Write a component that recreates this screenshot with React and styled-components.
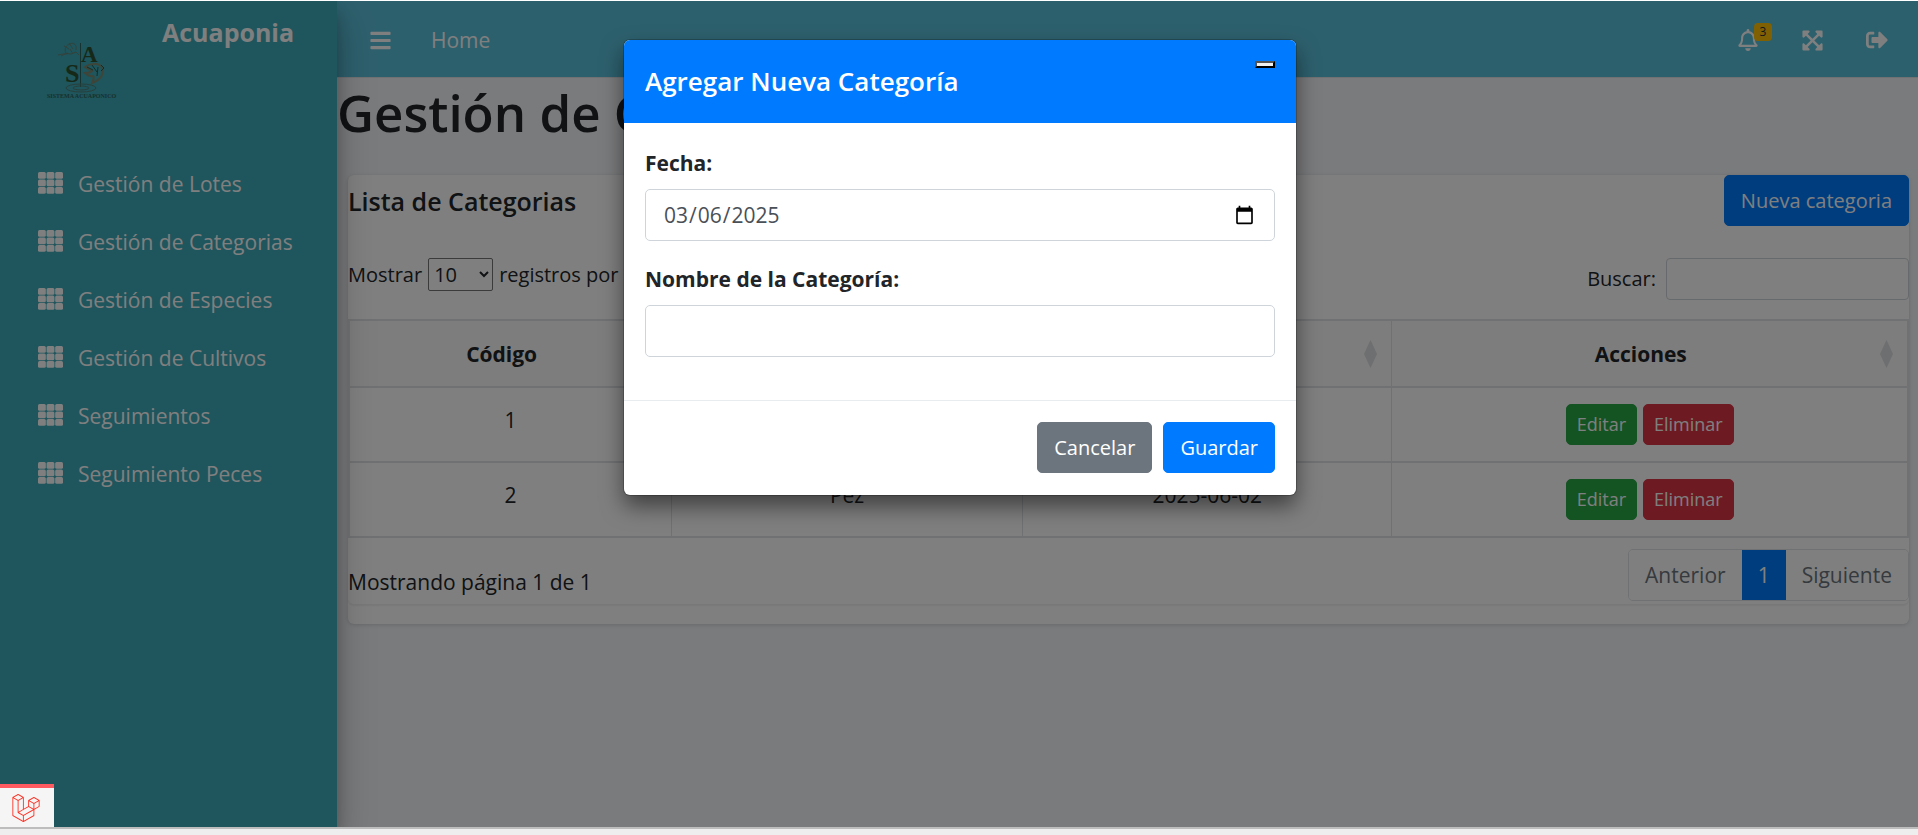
import React from "react";
import styled, { createGlobalStyle } from "styled-components";
import { FaBars, FaRegBell, FaExpandArrowsAlt, FaSignOutAlt } from "react-icons/fa";
import { SiLaravel } from "react-icons/si";

const GlobalStyle = createGlobalStyle`
  *, *::before, *::after { box-sizing: border-box; }
  body {
    margin: 0;
    background: #fff;
    color: #212529;
    font-family: "Open Sans", "Noto Sans", sans-serif;
    font-size: 21px;
    line-height: 32px;
  }
  button, input, select { font: inherit; color: inherit; }
  h1, h2, p, ul { margin: 0; padding: 0; }
  a { color: inherit; text-decoration: none; }
`;

const Page = styled.div`
  display: flex;
  flex-direction: column;
  min-height: 100vh;
  padding-top: 1px;
`;

const Screen = styled.div`
  position: relative;
  display: flex;
  flex: 1;
  overflow: hidden;
`;

const WindowEdge = styled.div`
  height: 8px;
  border-top: 2px solid #bdbdbd;
  background: #eee;
`;

const Sidebar = styled.aside`
  z-index: 1;
  flex: none;
  width: 337px;
  background: #3eaab8;
  color: #fff;
  box-shadow: 0 18px 36px rgba(0, 0, 0, 0.25), 0 12px 14px rgba(0, 0, 0, 0.22);
`;

const Brand = styled.a`
  display: flex;
  align-items: flex-start;
  gap: 42px;
  height: 138px;
  padding: 15px 36px 0 42px;
  font-size: 25px;
  font-weight: 700;
`;

const BrandLogo = styled.svg`
  flex: none;
  width: 78px;
  height: 78px;
  margin-top: 13px;
`;

const Menu = styled.ul`
  display: grid;
  gap: 6px;
  padding: 19px 11px;
  list-style: none;
`;

const MenuLink = styled.a`
  display: flex;
  align-items: flex-start;
  gap: 15px;
  height: 52px;
  padding: 11px 27px;
  line-height: 30px;
  white-space: nowrap;
  svg { flex: none; margin-top: 3px; }
`;

const Main = styled.div`
  flex: 1;
  min-width: 0;
  background: #f4f6f9;
`;

const Navbar = styled.header`
  display: flex;
  justify-content: space-between;
  align-items: center;
  height: 77px;
  padding: 2px 30px 0 32px;
  border-bottom: 1px solid #dee2e6;
  background: #5bc0da;
  color: #fff;
`;

const NavGroup = styled.nav`
  display: flex;
  align-items: center;
  gap: ${(p) => p.$gap}px;
`;

const IconButton = styled.button`
  position: relative;
  display: flex;
  padding: 0;
  border: 0;
  background: none;
`;

const Count = styled.span`
  position: absolute;
  top: -6px;
  left: 17px;
  width: 18px;
  border-radius: 4px;
  background: #ffc107;
  color: #1f2d3d;
  font-size: 12px;
  line-height: 18px;
  text-align: center;
`;

const PageTitle = styled.h1`
  padding: 2px 0 1px;
  font-size: 51px;
  font-weight: 600;
  line-height: 64px;
`;

const Card = styled.section`
  margin: 30px 9px 0 11px;
  padding-bottom: 20px;
  border-radius: 6px;
  background: #fff;
  box-shadow: 0 1px 4px rgba(0, 0, 0, 0.15);
`;

const CardBody = styled.div`
  padding-bottom: 3px;
  border-radius: 6px;
  box-shadow: 0 2px 2px rgba(0, 0, 0, 0.06);
`;

const CardHead = styled.div`
  display: flex;
  justify-content: space-between;
  align-items: center;
`;

const CardTitle = styled.h2`
  font-size: 25px;
  font-weight: 600;
`;

const Button = styled.button`
  padding: ${(p) => (p.$small ? "5px 10px" : "9px 16px")};
  border: 1px solid ${(p) => p.$color};
  border-radius: 5px;
  background: ${(p) => p.$color};
  color: #fff;
  font-size: ${(p) => (p.$small ? 18 : 20)}px;
  line-height: ${(p) => (p.$small ? 29 : 31)}px;
`;

const Tools = styled.div`
  display: flex;
  justify-content: space-between;
  align-items: flex-start;
  margin: 32px 0 19px;
  font-size: 20px;
`;

const Tool = styled.label`
  display: flex;
  align-items: center;
  gap: ${(p) => p.$gap}px;
`;

const PageSize = styled.select`
  width: 65px;
  height: 33px;
  padding: 0 1px;
  border: 1px solid #767676;
  border-radius: 2px;
  background: #fff;
`;

const SearchBox = styled.input`
  width: 243px;
  height: 42px;
  padding: 5px 10px;
  border: 1px solid #ced4da;
  border-radius: 4px;
  background: #fff;
`;

const Table = styled.table`
  width: 100%;
  border-collapse: collapse;
  border: 2px solid #dee2e6;
  table-layout: fixed;
  text-align: center;
`;

const Col = styled.col`
  width: ${(p) => p.$share}%;
`;

const HeadCell = styled.th`
  height: 67px;
  padding: 0 14px 0 16px;
  border: 1px solid #dee2e6;
  border-width: 2px 1px;
  background: #fafafa;
  font-weight: 700;
`;

const HeadLabel = styled.span`
  display: flex;
  align-items: center;
  gap: 7px;
  span { flex: 1; }
`;

const Cell = styled.td`
  height: 75px;
  padding: 16px;
  border: 1px solid #dee2e6;
  border-width: 2px 1px;
  vertical-align: top;
`;

const Actions = styled.div`
  display: flex;
  justify-content: center;
  gap: 6px;
`;

const TableFoot = styled.div`
  display: flex;
  justify-content: space-between;
  align-items: center;
  margin-top: 11px;
`;

const PageInfo = styled.p`
  padding-top: 14px;
`;

const Pager = styled.nav`
  display: flex;
  overflow: hidden;
  border: 1px solid #dee2e6;
  border-radius: 5px;
`;

const PageLink = styled.button`
  padding: 9px 16px;
  border: 0;
  background: ${(p) => (p.$active ? "#007bff" : "#fff")};
  color: ${(p) => (p.$active ? "#fff" : "#6c757d")};
`;

const Backdrop = styled.div`
  position: absolute;
  inset: 0;
  z-index: 2;
  display: flex;
  justify-content: center;
  align-items: flex-start;
  padding-top: 39px;
  background: rgba(0, 0, 0, 0.5);
`;

const Dialog = styled.form`
  width: 100%;
  max-width: 672px;
  margin-left: 2px;
  overflow: hidden;
  border-radius: 6px;
  background: #fff;
  box-shadow: 0 11px 22px rgba(0, 0, 0, 0.5), 0 0 0 1px rgba(0, 0, 0, 0.2);
`;

const DialogHead = styled.header`
  display: flex;
  justify-content: space-between;
  align-items: flex-start;
  padding: 21px;
  background: #007bff;
  color: #fff;
`;

const DialogTitle = styled.h2`
  font-size: 26px;
  font-weight: 600;
  line-height: 41px;
`;

const CloseButton = styled.button`
  width: 20px;
  height: 7px;
  padding: 0;
  border: 2px outset #000;
  background: #f0f0f0;
`;

const DialogBody = styled.div`
  display: grid;
  gap: 22px;
  padding: 24px 21px 43px;
`;

const Field = styled.label`
  display: grid;
  gap: 10px;
  font-weight: 700;
`;

const TextInput = styled.input`
  width: 100%;
  height: 52px;
  padding: 8px 17px;
  border: 1px solid #ced4da;
  border-radius: 5px;
  background: #fff;
  color: #495057;
  font-weight: 400;
`;

const DialogFoot = styled.footer`
  display: flex;
  justify-content: flex-end;
  gap: 11px;
  padding: 21px 21px 22px;
  border-top: 1px solid #e9ecef;
`;

const DebugBadge = styled.button`
  position: absolute;
  bottom: 0;
  left: 0;
  z-index: 3;
  display: flex;
  justify-content: center;
  align-items: center;
  width: 54px;
  height: 43px;
  padding: 0 3px 0 0;
  border: 0;
  border-top: 4px solid #ff5a5f;
  background: #f5f5f5;
  color: #ff2d20;
`;

const menu = [
  "Gestión de Lotes",
  "Gestión de Categorias",
  "Gestión de Especies",
  "Gestión de Cultivos",
  "Seguimientos",
  "Seguimiento Peces",
];

const columns = [
  { name: "Código", share: 20.7 },
  { name: "Nombre", share: 22.5 },
  { name: "Fecha", share: 23.7 },
  { name: "Acciones", share: 33.1 },
];

const rows = [
  { id: 1, name: "Planta", date: "2025-06-02" },
  { id: 2, name: "Pez", date: "2025-06-02" },
];

function Logo() {
  return (
    <BrandLogo viewBox="0 0 78 78" aria-hidden="true" fill="none" stroke="#4f8078" strokeWidth="1">
      <path d="M38.500 14v44" stroke="#2f6660" />
      <path d="M16 26c5-1 9-2 13-1l5-2 3 3M24 24c-2-4 0-8 4-9 4-2 7 1 6 6M22 17l5 3M27 14l4 6M19 27l7-3M31 25l-3-5" stroke="#64857a" />
      <path d="M43 38c5-4 12-4 16-1 3 4 2 10-2 13-2 2-5 3-7 4 1-3 3-5 1-7-3 1-6-1-8-3 3 0 5 0 7-2z" stroke="#7c8a70" strokeWidth="2" />
      <path d="M45 38l6 3M50 36l5 7M56 38l-1 9M59 36l3 3-3 3" stroke="#2f5a48" />
      <ellipse cx="39" cy="59" rx="15" ry="4" />
      <ellipse cx="39" cy="59" rx="8" ry="2" />
      <g fill="#2c5230" stroke="none" fontFamily="Liberation Serif, serif">
        <text x="39" y="33" fontSize="23">A</text>
        <text x="23" y="53" fontSize="26">S</text>
        <text x="5" y="69" fontSize="6" fill="#2c6460">SISTEMA ACUAPONICO</text>
      </g>
    </BrandLogo>
  );
}

function GridIcon() {
  return (
    <svg width="25" height="22" viewBox="0 0 25 22" fill="currentColor" aria-hidden="true">
      {[0, 7.5, 15].map((y) =>
        [0, 8.600, 17.200].map((x) => (
          <rect key={`${x}-${y}`} x={x} y={y} width="7.800" height="6.800" rx="1.500" />
        ))
      )}
    </svg>
  );
}

function SortMark() {
  return (
    <svg width="13" height="28" viewBox="0 0 13 28" fill="#dcdee0" aria-hidden="true">
      <path d="M6.500 0L13 14L6.500 28L0 14z" />
    </svg>
  );
}

export default function App() {
  return (
    <Page>
      <GlobalStyle />
      <Screen>
        <Sidebar>
          <Brand href="#">
            <Logo />
            Acuaponia
          </Brand>
          <Menu>
            {menu.map((item) => (
              <li key={item}>
                <MenuLink href="#">
                  <GridIcon />
                  {item}
                </MenuLink>
              </li>
            ))}
          </Menu>
        </Sidebar>
        <Main>
          <Navbar>
            <NavGroup $gap={39}>
              <IconButton aria-label="Menu"><FaBars size={23} /></IconButton>
              <a href="#">Home</a>
            </NavGroup>
            <NavGroup $gap={42}>
              <IconButton aria-label="Notificaciones">
                <FaRegBell size={22} />
                <Count>3</Count>
              </IconButton>
              <IconButton aria-label="Pantalla completa"><FaExpandArrowsAlt size={23} /></IconButton>
              <IconButton aria-label="Salir"><FaSignOutAlt size={22} /></IconButton>
            </NavGroup>
          </Navbar>
          <PageTitle>Gestión de Categorias</PageTitle>
          <Card>
            <CardBody>
              <CardHead>
                <CardTitle>Lista de Categorias</CardTitle>
                <Button type="button" $color="#007bff">Nueva categoria</Button>
              </CardHead>
              <Tools>
                <Tool $gap={6}>
                  Mostrar
                  <PageSize defaultValue="10">
                    <option>10</option>
                    <option>25</option>
                    <option>50</option>
                  </PageSize>
                  registros por página
                </Tool>
                <Tool $gap={10}>
                  Buscar:
                  <SearchBox type="search" />
                </Tool>
              </Tools>
              <Table>
                <colgroup>
                  {columns.map((c) => <Col key={c.name} $share={c.share} />)}
                </colgroup>
                <thead>
                  <tr>
                    {columns.map((c) => (
                      <HeadCell key={c.name}>
                        <HeadLabel><span>{c.name}</span><SortMark /></HeadLabel>
                      </HeadCell>
                    ))}
                  </tr>
                </thead>
                <tbody>
                  {rows.map((r) => (
                    <tr key={r.id}>
                      <Cell>{r.id}</Cell>
                      <Cell>{r.name}</Cell>
                      <Cell>{r.date}</Cell>
                      <Cell>
                        <Actions>
                          <Button type="button" $small $color="#28a745">Editar</Button>
                          <Button type="button" $small $color="#dc3545">Eliminar</Button>
                        </Actions>
                      </Cell>
                    </tr>
                  ))}
                </tbody>
              </Table>
              <TableFoot>
                <PageInfo>Mostrando página 1 de 1</PageInfo>
                <Pager>
                  <PageLink>Anterior</PageLink>
                  <PageLink $active>1</PageLink>
                  <PageLink>Siguiente</PageLink>
                </Pager>
              </TableFoot>
            </CardBody>
          </Card>
        </Main>
        <Backdrop>
          <Dialog role="dialog" aria-labelledby="dialog-title">
            <DialogHead>
              <DialogTitle id="dialog-title">Agregar Nueva Categoría</DialogTitle>
              <CloseButton type="button" aria-label="Cerrar" />
            </DialogHead>
            <DialogBody>
              <Field>
                Fecha:
                <TextInput type="date" defaultValue="2025-03-06" />
              </Field>
              <Field>
                Nombre de la Categoría:
                <TextInput type="text" />
              </Field>
            </DialogBody>
            <DialogFoot>
              <Button type="button" $color="#6c757d">Cancelar</Button>
              <Button type="submit" $color="#007bff">Guardar</Button>
            </DialogFoot>
          </Dialog>
        </Backdrop>
        <DebugBadge aria-label="Debugbar"><SiLaravel size={28} /></DebugBadge>
      </Screen>
      <WindowEdge />
    </Page>
  );
}
